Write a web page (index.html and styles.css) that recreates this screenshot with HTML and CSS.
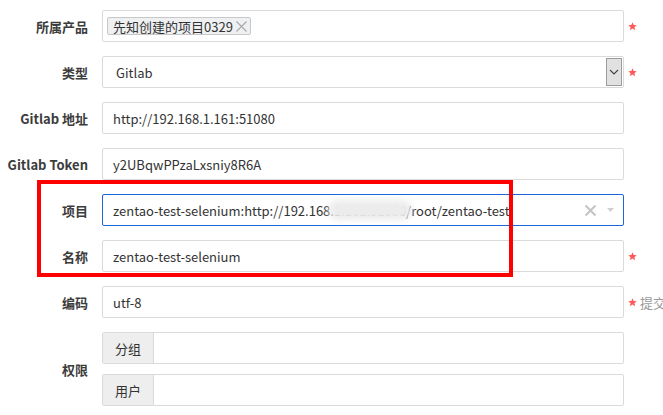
FILE: index.html
```html
<!DOCTYPE html>
<html lang="zh">
<head>
<meta charset="utf-8">
<link rel="stylesheet" href="styles.css">
</head>
<body>
<div class="form">
  <div class="lbl">所属产品</div>
  <div class="input tags"><span class="tag">先知创建的项目0329<svg class="tag-x" width="13" height="13" viewBox="0 0 13 13"><path d="M1.5 1.5l10 10M11.5 1.5l-10 10" stroke="#a8a8a8" stroke-width="1.1" fill="none"/></svg></span></div>
  <div class="aside"><svg class="star" width="9" height="9" viewBox="0 0 10 10"><path d="M5 0.3l1.3 3.1 3.4 0.2-2.6 2.2 0.8 3.3L5 7.3 2.1 9.1l0.8-3.3L0.3 3.6l3.4-0.2z" fill="#ff5858"/></svg></div>

  <div class="lbl">类型</div>
  <div class="input select"><span class="sel-text">Gitlab</span><span class="sel-btn"><svg width="10" height="6" viewBox="0 0 10 6"><path d="M1 1l4 4 4-4" stroke="#444" stroke-width="1.1" fill="none"/></svg></span></div>
  <div class="aside"><svg class="star" width="9" height="9" viewBox="0 0 10 10"><path d="M5 0.3l1.3 3.1 3.4 0.2-2.6 2.2 0.8 3.3L5 7.3 2.1 9.1l0.8-3.3L0.3 3.6l3.4-0.2z" fill="#ff5858"/></svg></div>

  <div class="lbl">Gitlab 地址</div>
  <div class="input">http://192.168.1.161:51080</div>
  <div class="aside"></div>

  <div class="lbl">Gitlab Token</div>
  <div class="input">y2UBqwPPzaLxsniy8R6A</div>
  <div class="aside"></div>

  <div class="lbl">项目</div>
  <div class="input chosen"><span class="chosen-text">zentao-test-selenium:http://192.168.1.161:51080/root/zentao-test-selenium</span><span class="blur"></span><svg class="chosen-x" width="13" height="13" viewBox="0 0 13 13"><path d="M1.5 1.5l10 10M11.5 1.5l-10 10" stroke="#c4c4c4" stroke-width="2" fill="none"/></svg><svg class="caret" width="7" height="4" viewBox="0 0 7 4"><path d="M0 0h7L3.5 4z" fill="#d0d0d0"/></svg></div>
  <div class="aside"></div>

  <div class="lbl">名称</div>
  <div class="input">zentao-test-selenium</div>
  <div class="aside"><svg class="star" width="9" height="9" viewBox="0 0 10 10"><path d="M5 0.3l1.3 3.1 3.4 0.2-2.6 2.2 0.8 3.3L5 7.3 2.1 9.1l0.8-3.3L0.3 3.6l3.4-0.2z" fill="#ff5858"/></svg></div>

  <div class="lbl">编码</div>
  <div class="input">utf-8</div>
  <div class="aside"><svg class="star" width="9" height="9" viewBox="0 0 10 10"><path d="M5 0.3l1.3 3.1 3.4 0.2-2.6 2.2 0.8 3.3L5 7.3 2.1 9.1l0.8-3.3L0.3 3.6l3.4-0.2z" fill="#ff5858"/></svg><span class="hint">提交时使用的编码</span></div>

  <div class="lbl">权限</div>
  <div class="groups">
    <div class="grp"><span class="addon">分组</span><span class="grp-field"></span></div>
    <div class="grp"><span class="addon">用户</span><span class="grp-field"></span></div>
  </div>
  <div class="aside"></div>
</div>
<div class="mark"></div>
</body>
</html>
```
FILE: styles.css
```css
html, body {
  margin: 0;
  padding: 0;
}
body {
  width: 663px;
  height: 415px;
  overflow: hidden;
  position: relative;
  background: #fff;
  font-family: "Noto Sans CJK SC", "Noto Sans", sans-serif;
  font-size: 13px;
  color: #333;
}
.form {
  display: grid;
  grid-template-columns: 102px 522px 39px;
  row-gap: 14px;
  padding-top: 10px;
}
.lbl {
  display: flex;
  align-items: center;
  justify-content: flex-end;
  padding-right: 14px;
  font-weight: bold;
  font-size: 13px;
  color: #3c3c3c;
  white-space: nowrap;
}
.input {
  height: 32px;
  box-sizing: border-box;
  border: 1px solid #dadada;
  border-radius: 2px;
  padding: 0 10px;
  display: flex;
  align-items: center;
  font-size: 13px;
  color: #333;
  white-space: nowrap;
  overflow: hidden;
  position: relative;
}
.aside {
  display: flex;
  align-items: center;
  padding-left: 4px;
  white-space: nowrap;
  overflow: hidden;
}
.star {
  display: block;
  flex: none;
}
.hint {
  margin-left: 3px;
  color: #9a9a9a;
  font-size: 13px;
}
.tags {
  padding: 0 4px;
}
.tag {
  display: flex;
  align-items: center;
  height: 18px;
  box-sizing: border-box;
  border: 1px solid #c8c8c8;
  border-radius: 2px;
  background: #eef0f2;
  padding: 0 2px 0 5px;
  font-size: 13px;
  color: #333;
}
.tag-x {
  margin-left: 2px;
}
.select {
  padding: 0 1px 0 13px;
  justify-content: space-between;
}
.sel-btn {
  width: 16px;
  height: 28px;
  box-sizing: border-box;
  border: 1px solid #9d9d9d;
  background: #e1e1e1;
  display: flex;
  align-items: center;
  justify-content: center;
}
.chosen {
  border-color: #1a67e0;
}
.chosen-text {
  width: 398px;
  overflow: hidden;
  flex: none;
}
.blur {
  position: absolute;
  left: 225px;
  top: 5px;
  width: 84px;
  height: 20px;
  border-radius: 10px;
  background: #ececec;
  filter: blur(3px);
}
.chosen-x {
  margin-left: 73px;
  flex: none;
}
.caret {
  margin-left: 10px;
  flex: none;
}
.groups {
  display: flex;
  flex-direction: column;
  gap: 10px;
}
.grp {
  display: flex;
  height: 32px;
  box-sizing: border-box;
  border: 1px solid #dadada;
  border-radius: 2px;
}
.addon {
  width: 50px;
  background: #eeeeee;
  border-right: 1px solid #dadada;
  display: flex;
  align-items: center;
  justify-content: center;
  font-size: 13px;
  color: #333;
}
.grp-field {
  flex: 1;
}
.mark {
  position: absolute;
  left: 37px;
  top: 180px;
  width: 476px;
  height: 97px;
  box-sizing: border-box;
  border: 4px solid #ff0000;
}
```
